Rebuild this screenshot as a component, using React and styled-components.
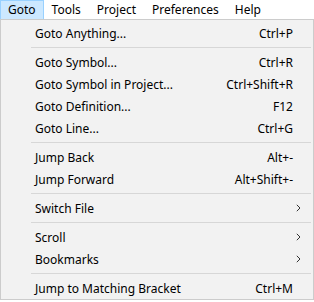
import React from "react";
import styled, { createGlobalStyle } from "styled-components";

const Global = createGlobalStyle`
  html, body { margin: 0; padding: 0; background: #ffffff; }
  body { font-family: "Noto Sans", "Segoe UI", sans-serif; font-size: 12px; color: #000; }
`;

const Page = styled.div`
  width: 314px;
  height: 302px;
  background: #ffffff;
  display: flex;
  flex-direction: column;
`;

const MenuBar = styled.div`
  display: flex;
  height: 19px;
  background: #ffffff;
`;

const BarItem = styled.div`
  box-sizing: border-box;
  height: 19px;
  padding: 0 7px;
  display: flex;
  align-items: center;
  line-height: 1;
  background: ${(p) => (p.$active ? "#cce8ff" : "transparent")};
  border: 1px solid ${(p) => (p.$active ? "#99d1ff" : "transparent")};
  border-bottom: none;
  margin-right: ${(p) => p.$gap || 0}px;
`;

const Popup = styled.div`
  box-sizing: border-box;
  width: 314px;
  height: 281px;
  background: #f2f2f2;
  border: 1px solid #cccccc;
  padding: 2px 2px 0 2px;
  display: flex;
  flex-direction: column;
`;

const Row = styled.div`
  height: 22px;
  display: flex;
  align-items: center;
  padding-left: 32px;
  padding-right: 18px;
  white-space: nowrap;
`;

const Label = styled.span`
  flex: 1;
`;

const Shortcut = styled.span`
  text-align: right;
`;

const Arrow = styled.svg`
  width: 5px;
  height: 8px;
  margin-right: -8px;
`;

const Separator = styled.div`
  height: 7px;
  display: flex;
  align-items: center;
  padding-left: 28px;
  &::after {
    content: "";
    flex: 1;
    height: 1px;
    background: #d7d7d7;
  }
`;

const Chevron = () => (
  <Arrow viewBox="0 0 5 8">
    <path d="M0.8 0.8 L4 4 L0.8 7.2" fill="none" stroke="#333" strokeWidth="1" />
  </Arrow>
);

const items = [
  { label: "Goto Anything...", sc: "Ctrl+P" },
  "sep",
  { label: "Goto Symbol...", sc: "Ctrl+R" },
  { label: "Goto Symbol in Project...", sc: "Ctrl+Shift+R" },
  { label: "Goto Definition...", sc: "F12" },
  { label: "Goto Line...", sc: "Ctrl+G" },
  "sep",
  { label: "Jump Back", sc: "Alt+-" },
  { label: "Jump Forward", sc: "Alt+Shift+-" },
  "sep",
  { label: "Switch File", sub: true },
  "sep",
  { label: "Scroll", sub: true },
  { label: "Bookmarks", sub: true },
  "sep",
  { label: "Jump to Matching Bracket", sc: "Ctrl+M" },
];

export default function App() {
  return (
    <Page>
      <Global />
      <MenuBar>
        <BarItem $active>Goto</BarItem>
        <BarItem>Tools</BarItem>
        <BarItem>Project</BarItem>
        <BarItem>Preferences</BarItem>
        <BarItem>Help</BarItem>
      </MenuBar>
      <Popup>
        {items.map((it, i) =>
          it === "sep" ? (
            <Separator key={i} />
          ) : (
            <Row key={i}>
              <Label>{it.label}</Label>
              {it.sc && <Shortcut>{it.sc}</Shortcut>}
              {it.sub && <Chevron />}
            </Row>
          )
        )}
      </Popup>
    </Page>
  );
}
